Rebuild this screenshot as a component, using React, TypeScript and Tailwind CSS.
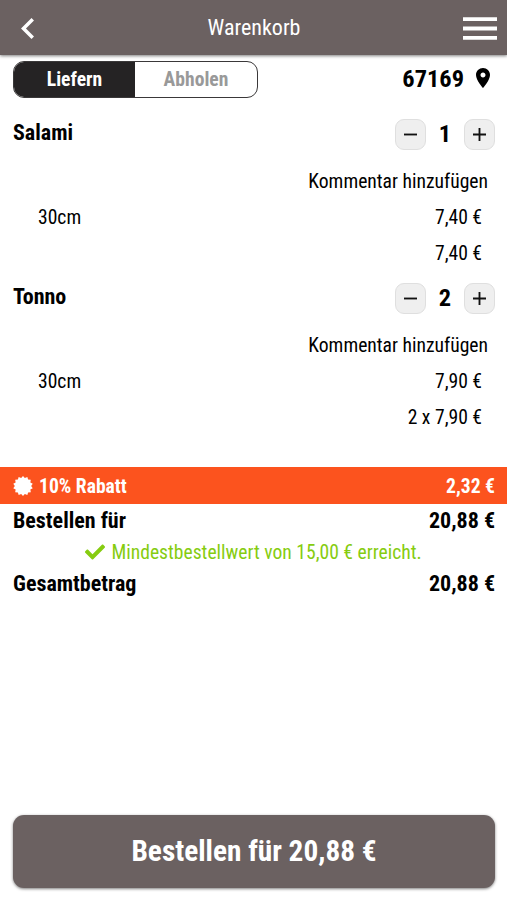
import { FaCheck } from "react-icons/fa";

type CartItem = {
  name: string;
  quantity: number;
  size: string;
  price: string;
  total: string;
};

const items: CartItem[] = [
  { name: "Salami", quantity: 1, size: "30cm", price: "7,40 €", total: "7,40 €" },
  { name: "Tonno", quantity: 2, size: "30cm", price: "7,90 €", total: "2 x 7,90 €" },
];

// 14 spikes, alternating outer and inner radius
const sealPoints = Array.from({ length: 28 }, (_, i) => {
  const radius = i % 2 === 0 ? 12 : 9.8;
  const angle = (i * Math.PI) / 14 - Math.PI / 2;
  return `${(12 + radius * Math.cos(angle)).toFixed(2)},${(12 + radius * Math.sin(angle)).toFixed(2)}`;
}).join(" ");

function StepButton({ label, d }: { label: string; d: string }) {
  return (
    <button
      aria-label={label}
      className="flex size-[31px] items-center justify-center rounded-[9px] border border-[#dfdfdf] bg-[#efefef]"
    >
      <svg viewBox="5 5 14 14" className="size-[13px]" fill="#111111">
        <path d={d} />
      </svg>
    </button>
  );
}

function CartRow({ item }: { item: CartItem }) {
  return (
    <section className="h-[164px]">
      <div className="flex h-[31px] items-center justify-between pr-3 pl-[13px] font-bold">
        <h2 className="pb-1 text-[22px]">{item.name}</h2>
        <div className="flex items-center">
          <StepButton label="Weniger" d="M19 13H5v-2h14v2z" />
          <span className="w-[38px] text-center text-[24.4px]">{item.quantity}</span>
          <StepButton label="Mehr" d="M19 13h-6v6h-2v-6H5v-2h6V5h2v6h6v2z" />
        </div>
      </div>
      <div className="mt-[14px] flex h-9 items-center justify-end pr-[19px]">Kommentar hinzufügen</div>
      <div className="flex h-9 items-center justify-between pr-[25px] pl-[38px]">
        <span>{item.size}</span>
        <span>{item.price}</span>
      </div>
      <div className="flex h-9 items-center justify-end pr-[25px]">{item.total}</div>
    </section>
  );
}

function TotalRow({ label, value }: { label: string; value: string }) {
  return (
    <div className="flex h-8 items-center justify-between pt-px pr-3 pl-[13px] text-[22px] font-bold">
      <span>{label}</span>
      <span>{value}</span>
    </div>
  );
}

export default function App() {
  return (
    <div className="flex h-[900px] w-[507px] flex-col bg-white font-['Roboto_Condensed','Roboto',sans-serif] text-[19.6px] leading-none text-black [font-stretch:condensed]">
      <header className="flex h-[55px] shrink-0 items-center justify-between bg-[#6b6161] pt-px pr-[10px] pl-[21px] text-white shadow-[0_1px_3px_rgba(0,0,0,0.5)]">
        <svg viewBox="8 6 7.41 12" className="mr-[11px] h-[21px] w-[13px]" fill="currentColor">
          <path d="M15.41 7.41L14 6l-6 6 6 6 1.41-1.41L10.83 12z" />
        </svg>
        <h1 className="text-[22px]">Warenkorb</h1>
        <svg viewBox="3 6 18 12" className="h-[23px] w-[34px]" fill="currentColor">
          <path d="M3 18h18v-2H3v2zm0-5h18v-2H3v2zm0-7v2h18V6H3z" />
        </svg>
      </header>

      <div className="mt-[6px] flex h-[37px] shrink-0 items-center justify-between pr-[17px] pl-[13px] font-bold">
        <div className="flex h-full w-[245px] overflow-hidden rounded-[11px] border border-[#3a3839]">
          <button className="w-[121px] bg-[#252324] pt-px text-white">Liefern</button>
          <button className="flex-1 pt-px text-[#999999]">Abholen</button>
        </div>
        <div className="flex items-center gap-3 text-[24.4px]">
          <span>67169</span>
          <svg viewBox="5 2 14 20" className="mb-[3px] h-[20px] w-[14px]" fill="currentColor">
            <path d="M12 2C8.13 2 5 5.13 5 9c0 5.25 7 13 7 13s7-7.75 7-13c0-3.87-3.13-7-7-7zm0 9.5c-1.38 0-2.5-1.12-2.5-2.5s1.12-2.5 2.5-2.5 2.5 1.12 2.5 2.5-1.12 2.5-2.5 2.5z" />
          </svg>
        </div>
      </div>

      <main className="mt-[21px] h-[348px] shrink-0">
        {items.map((item) => (
          <CartRow key={item.name} item={item} />
        ))}
      </main>

      <div className="flex h-[37px] shrink-0 items-center justify-between bg-[#fc531e] pr-3 pl-[13px] font-bold text-white">
        <span className="flex items-center gap-[6px]">
          <svg viewBox="0 0 24 24" className="size-[20px]" fill="currentColor">
            <polygon points={sealPoints} />
          </svg>
          <span className="pt-0.5">10% Rabatt</span>
        </span>
        <span className="pt-0.5">2,32 €</span>
      </div>
      <TotalRow label="Bestellen für" value="20,88 €" />
      <div className="flex h-[31px] items-center justify-center gap-1.5 text-[#86cc10]">
        <FaCheck size={20} />
        <span className="pt-0.5">Mindestbestellwert von 15,00 € erreicht.</span>
      </div>
      <TotalRow label="Gesamtbetrag" value="20,88 €" />

      <button className="mr-3 mb-3 ml-[13px] mt-auto h-[73px] rounded-[11px] bg-[#6b6161] text-[29.3px] font-bold text-white shadow-[0_1px_3px_rgba(0,0,0,0.5)]">
        Bestellen für 20,88 €
      </button>
    </div>
  );
}
